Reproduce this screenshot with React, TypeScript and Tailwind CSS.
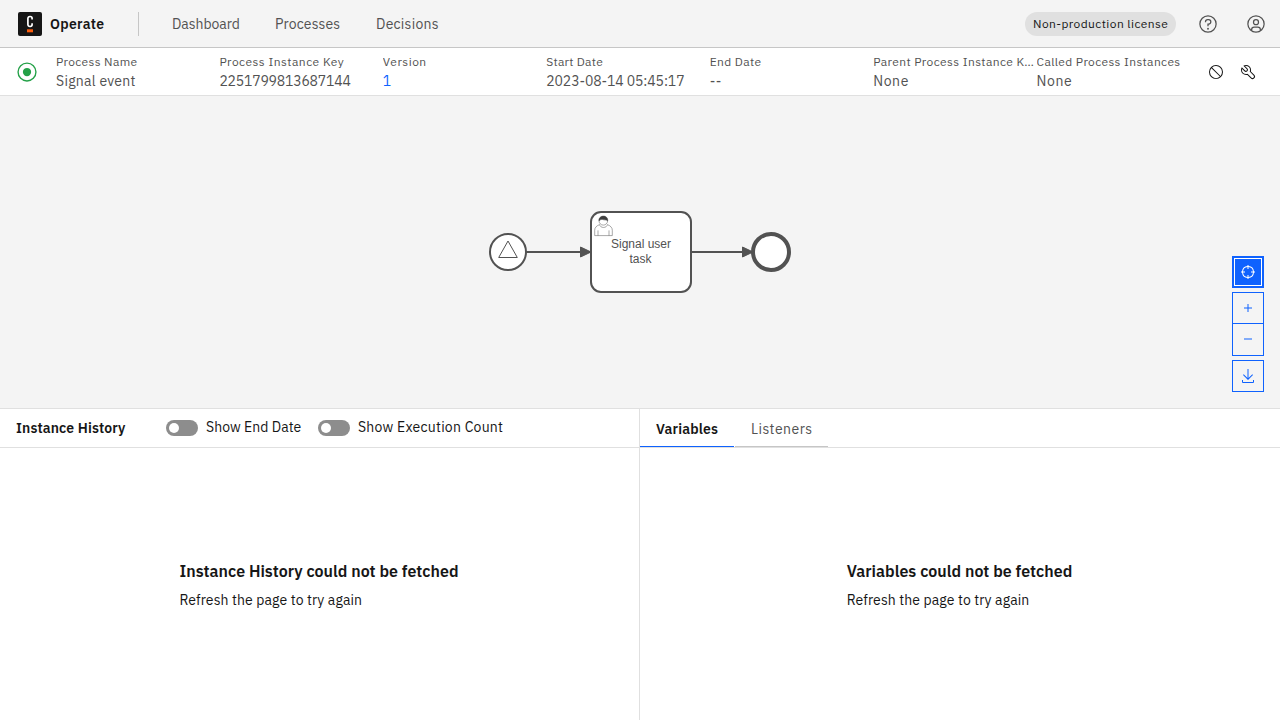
import type { ReactNode } from "react";

type IconProps = { size: number; className?: string; children: ReactNode };

function Icon({ size, className, children }: IconProps) {
  return (
    <svg width={size} height={size} viewBox="0 0 32 32" fill="currentColor" className={className} aria-hidden="true">
      {children}
    </svg>
  );
}

const HelpIcon = () => (
  <Icon size={20}>
    <path d="M16 2a14 14 0 1 0 14 14A14 14 0 0 0 16 2Zm0 26a12 12 0 1 1 12-12A12 12 0 0 1 16 28Z" />
    <circle cx="16" cy="23.5" r="1.5" />
    <path d="M17 8h-1.5A4.49 4.49 0 0 0 11 12.5V13h2v-.5A2.5 2.5 0 0 1 15.5 10H17a2.5 2.5 0 0 1 0 5h-2v4.5h2V17a4.5 4.5 0 0 0 0-9Z" />
  </Icon>
);

const UserIcon = () => (
  <Icon size={20}>
    <path d="M16 8a5 5 0 1 0 5 5A5 5 0 0 0 16 8Zm0 8a3 3 0 1 1 3-3A3 3 0 0 1 16 16Z" />
    <path d="M16 2A14 14 0 1 0 30 16 14.016 14.016 0 0 0 16 2ZM10 26.377V25a3 3 0 0 1 3-3h6a3 3 0 0 1 3 3v1.377a11.9 11.9 0 0 1-12 0Zm13.993-1.451A5 5 0 0 0 19 20H13a5 5 0 0 0-4.993 4.926 12 12 0 1 1 15.985 0Z" />
  </Icon>
);

const CancelIcon = () => (
  <Icon size={16}>
    <path d="M2 16A14 14 0 1 0 16 2 14 14 0 0 0 2 16Zm23.15 7.75L8.25 6.85a12 12 0 0 1 16.9 16.9ZM8.24 25.16A12 12 0 0 1 6.84 8.27L23.73 25.16a12 12 0 0 1-15.49 0Z" />
  </Icon>
);

const ToolsIcon = () => (
  <Icon size={16}>
    <path d="M12.1 2a9.8 9.8 0 0 0-5.4 1.6l6.4 6.4a2.1 2.1 0 0 1 .2 3 2.1 2.1 0 0 1-3-.2L3.7 6.4A9.84 9.84 0 0 0 2 12.1a10.14 10.14 0 0 0 10.1 10.1 10.9 10.9 0 0 0 2.6-.3l6.7 6.7a5 5 0 0 0 7.1-7.1l-6.7-6.7a10.9 10.9 0 0 0 .3-2.6A10 10 0 0 0 12.1 2Zm8 10.1a7.61 7.61 0 0 1-.3 2.1l-.3 1.1.8.8 6.7 6.7a2.88 2.88 0 0 1 .9 2.1A2.72 2.72 0 0 1 27 27a2.9 2.9 0 0 1-4.2 0l-6.7-6.7-.8-.8-1.1.3a7.61 7.61 0 0 1-2.1.3 8.27 8.27 0 0 1-5.7-2.3A7.63 7.63 0 0 1 4 12.1a8.33 8.33 0 0 1 .3-2.2l4.4 4.4a4.14 4.14 0 0 0 5.9.2 4.14 4.14 0 0 0-.2-5.9L10 4.2a6.45 6.45 0 0 1 2-.3 8.27 8.27 0 0 1 5.7 2.3 8.49 8.49 0 0 1 2.4 5.9Z" />
  </Icon>
);

const CenterIcon = () => (
  <Icon size={16}>
    <path d="M30 15H27.95A12.007 12.007 0 0 0 17 4.05V2H15V4.05A12.007 12.007 0 0 0 4.05 15H2v2H4.05A12.007 12.007 0 0 0 15 27.95V30h2V27.95A12.007 12.007 0 0 0 27.95 17H30ZM17 25.95V22H15v3.95A10.017 10.017 0 0 1 6.05 17H10V15H6.05A10.017 10.017 0 0 1 15 6.05V10h2V6.05A10.017 10.017 0 0 1 25.95 15H22v2h3.95A10.017 10.017 0 0 1 17 25.95Z" />
  </Icon>
);

const AddIcon = () => (
  <Icon size={16}>
    <path d="M17 15V8H15v7H8v2h7v7h2v-7h7V15Z" />
  </Icon>
);

const SubtractIcon = () => (
  <Icon size={16}>
    <path d="M8 15h16v2H8z" />
  </Icon>
);

const DownloadIcon = () => (
  <Icon size={16}>
    <path d="M26 24v4H6V24H4v4a2 2 0 0 0 2 2H26a2 2 0 0 0 2-2V24ZM26 14 24.59 12.59 17 20.17V2H15V20.17L7.41 12.59 6 14l10 10Z" />
  </Icon>
);

function Logo() {
  return (
    <svg width="24" height="24" viewBox="0 0 24 24" aria-hidden="true">
      <rect width="24" height="24" rx="2" fill="#161616" />
      <path
        d="M14.1 7.6V6.4a1.9 1.9 0 0 0-1.9-1.9h-.4a1.9 1.9 0 0 0-1.9 1.9v6.2a1.9 1.9 0 0 0 1.9 1.9h.4a1.9 1.9 0 0 0 1.9-1.9v-1.3"
        fill="none"
        stroke="#fff"
        strokeWidth="1.7"
      />
      <rect x="9" y="17.3" width="6" height="3" fill="#fc5d0d" />
    </svg>
  );
}

function Header() {
  return (
    <header className="flex h-12 items-center border-b border-[#c6c6c6] bg-[#f4f4f4] pr-3.5 pl-[18px]">
      <Logo />
      <span className="ml-2 w-[88px] text-sm font-semibold tracking-[0.3px] text-[#161616]">Operate</span>
      <div className="h-6 w-px bg-[#c6c6c6]" />
      <nav className="ml-[33px] flex text-sm text-[#525252]">
        <span className="w-[103px] tracking-[-0.06px]">Dashboard</span>
        <span className="w-[101px] tracking-[0.15px]">Processes</span>
        <span className="tracking-[0.25px]">Decisions</span>
      </nav>
      <div className="ml-auto flex items-center text-[#525252]">
        <span className="mr-[22px] flex h-6 w-[151px] items-center rounded-full bg-[#e0e0e0] pl-2 text-xs tracking-[0.41px] whitespace-nowrap text-[#161616]">
          Non-production license
        </span>
        <span className="mr-7">
          <HelpIcon />
        </span>
        <UserIcon />
      </div>
    </header>
  );
}

const details = [
  { label: "Process Name", labelClass: "tracking-[0.36px]", value: "Signal event", valueClass: "tracking-[0.27px]" },
  { label: "Process Instance Key", labelClass: "tracking-[0.48px]", value: "2251799813687144", valueClass: "tracking-[-0.2px]" },
  { label: "Version", labelClass: "tracking-[0.5px]", value: "1", valueClass: "text-[#0f62fe]" },
  { label: "Start Date", labelClass: "tracking-[0.24px]", value: "2023-08-14 05:45:17", valueClass: "tracking-[-0.11px]" },
  { label: "End Date", labelClass: "tracking-[0.36px]", value: "--", valueClass: "tracking-[0.5px]" },
  { label: "Parent Process Instance Key", labelClass: "tracking-[0.4px]", value: "None", valueClass: "tracking-[0.6px]" },
  { label: "Called Process Instances", labelClass: "tracking-[0.37px]", value: "None", valueClass: "tracking-[0.6px]" },
];

function InstanceHeader() {
  return (
    <section className="flex h-12 items-center border-b border-[#e0e0e0] bg-white pr-4 pl-4 text-[#525252]">
      <svg width="22" height="22" viewBox="0 0 32 32" fill="#24a148" aria-hidden="true">
        <path d="M16 2a14 14 0 1 0 14 14A14 14 0 0 0 16 2Zm0 26a12 12 0 1 1 12-12A12 12 0 0 1 16 28Z" />
        <circle cx="16" cy="16" r="6" />
      </svg>
      <dl className="ml-[18px] grid flex-1 grid-cols-7 pt-px">
        {details.map((d) => (
          <div key={d.label} className="min-w-0">
            <dt className={`truncate text-xs leading-4 ${d.labelClass}`}>{d.label}</dt>
            <dd className={`pt-px text-sm leading-5 ${d.valueClass}`}>{d.value}</dd>
          </div>
        ))}
      </dl>
      <div className="flex text-[#161616]">
        <button className="flex size-8 items-center justify-center">
          <CancelIcon />
        </button>
        <button className="flex size-8 items-center justify-center">
          <ToolsIcon />
        </button>
      </div>
    </section>
  );
}

function Diagram() {
  return (
    <section className="flex h-[312px] bg-[#f4f4f4] pl-12">
      <div className="flex flex-1 items-center justify-center">
        <svg width="304" height="84" viewBox="488 210 304 84" fill="#fff" stroke="#525252">
          <circle cx="508" cy="252" r="18" strokeWidth="2" />
          <path d="M508 241 L517.3 257.5 H498.7 Z" strokeWidth="1" />
          <path d="M526 252 H590" strokeWidth="2" />
          <path d="M580.5 247 L591 252 L580.5 257 Z" fill="#525252" strokeWidth="1" />
          <rect x="591" y="212" width="100" height="80" rx="10" strokeWidth="2" />
          <path
            d="M599.6 224.6 C596.5 225.8 594.7 227.6 594.7 230.2 V235.6 H612.3 V230.2 C612.3 227.6 610.5 225.8 607.4 224.6 C607 228.4 600 228.4 599.6 224.6 M598 235.6 V230.4 M609 235.6 V230.4"
            strokeWidth="0.5"
          />
          <circle cx="603.3" cy="220.8" r="4.3" strokeWidth="0.5" />
          <path d="M599 221 C598.2 214.6 608.4 214.2 607.7 221 C606.6 219.6 605.3 220.4 603.7 219.8 C602 219.2 600.2 219.4 599 221 Z" fill="#3d3d3d" strokeWidth="0.5" />
          <g fill="#525252" stroke="none" fontFamily="'Liberation Sans', Arial, sans-serif" fontSize="12">
            <text x="611" y="248">Signal user</text>
            <text x="629.5" y="263">task</text>
          </g>
          <path d="M692 252 H753" strokeWidth="2" />
          <path d="M742.5 247 L753 252 L742.5 257 Z" fill="#525252" strokeWidth="1" />
          <circle cx="771" cy="252" r="18" strokeWidth="4" />
        </svg>
      </div>
      <div className="flex w-12 flex-col items-start justify-end gap-1 pb-4 text-[#0f62fe]">
        <button className="flex size-8 items-center justify-center border-2 border-[#0f62fe] bg-[#0f62fe] text-white ring-1 ring-white ring-inset">
          <CenterIcon />
        </button>
        <div className="flex w-8 flex-col border border-[#0f62fe]">
          <button className="flex h-[30px] items-center justify-center">
            <AddIcon />
          </button>
          <button className="flex h-8 items-center justify-center border-t border-[#0f62fe] pb-px">
            <SubtractIcon />
          </button>
        </div>
        <button className="flex size-8 items-center justify-center border border-[#0f62fe]">
          <DownloadIcon />
        </button>
      </div>
    </section>
  );
}

function Toggle({ label, labelClass }: { label: string; labelClass: string }) {
  return (
    <label className="flex items-center gap-2">
      <span className="flex h-4 w-8 items-center rounded-full bg-[#8d8d8d] px-[3px]">
        <span className="size-2.5 rounded-full bg-white" />
      </span>
      <span className={`-mt-0.5 text-sm whitespace-nowrap ${labelClass}`}>{label}</span>
    </label>
  );
}

function EmptyMessage({ title }: { title: string }) {
  return (
    <div className="flex flex-1 items-center justify-center">
      <div className="pr-px">
        <h3 className="text-base leading-6 font-semibold tracking-[0.03px]">{title}</h3>
        <p className="pt-2 text-sm leading-[18px] tracking-[0.1px]">Refresh the page to try again</p>
      </div>
    </div>
  );
}

export default function App() {
  return (
    <div className="flex h-screen flex-col overflow-hidden bg-white font-['IBM_Plex_Sans','Noto_Sans',sans-serif] text-[#161616]">
      <Header />
      <InstanceHeader />
      <Diagram />
      <main className="grid flex-1 grid-cols-2 border-t border-[#e0e0e0]">
        <section className="flex flex-col border-r border-[#e0e0e0]">
          <div className="flex h-[39px] items-center border-b border-[#e0e0e0] pl-4">
            <h2 className="w-[150px] text-sm font-semibold tracking-[0.13px]">Instance History</h2>
            <div className="flex">
              <div className="w-[152px]">
                <Toggle label="Show End Date" labelClass="tracking-[0.03px]" />
              </div>
              <Toggle label="Show Execution Count" labelClass="tracking-[0.23px]" />
            </div>
          </div>
          <EmptyMessage title="Instance History could not be fetched" />
        </section>
        <section className="flex flex-col">
          <div className="flex h-[39px] gap-px border-b border-[#e0e0e0] text-sm">
            <div className="flex w-[94px] items-center border-b border-[#0f62fe] pt-0.5 pl-4 font-semibold tracking-[0.16px]">Variables</div>
            <div className="flex w-[93px] items-center border-b border-[#c6c6c6] pt-0.5 pl-4 tracking-[0.46px] text-[#525252]">Listeners</div>
          </div>
          <EmptyMessage title="Variables could not be fetched" />
        </section>
      </main>
    </div>
  );
}
